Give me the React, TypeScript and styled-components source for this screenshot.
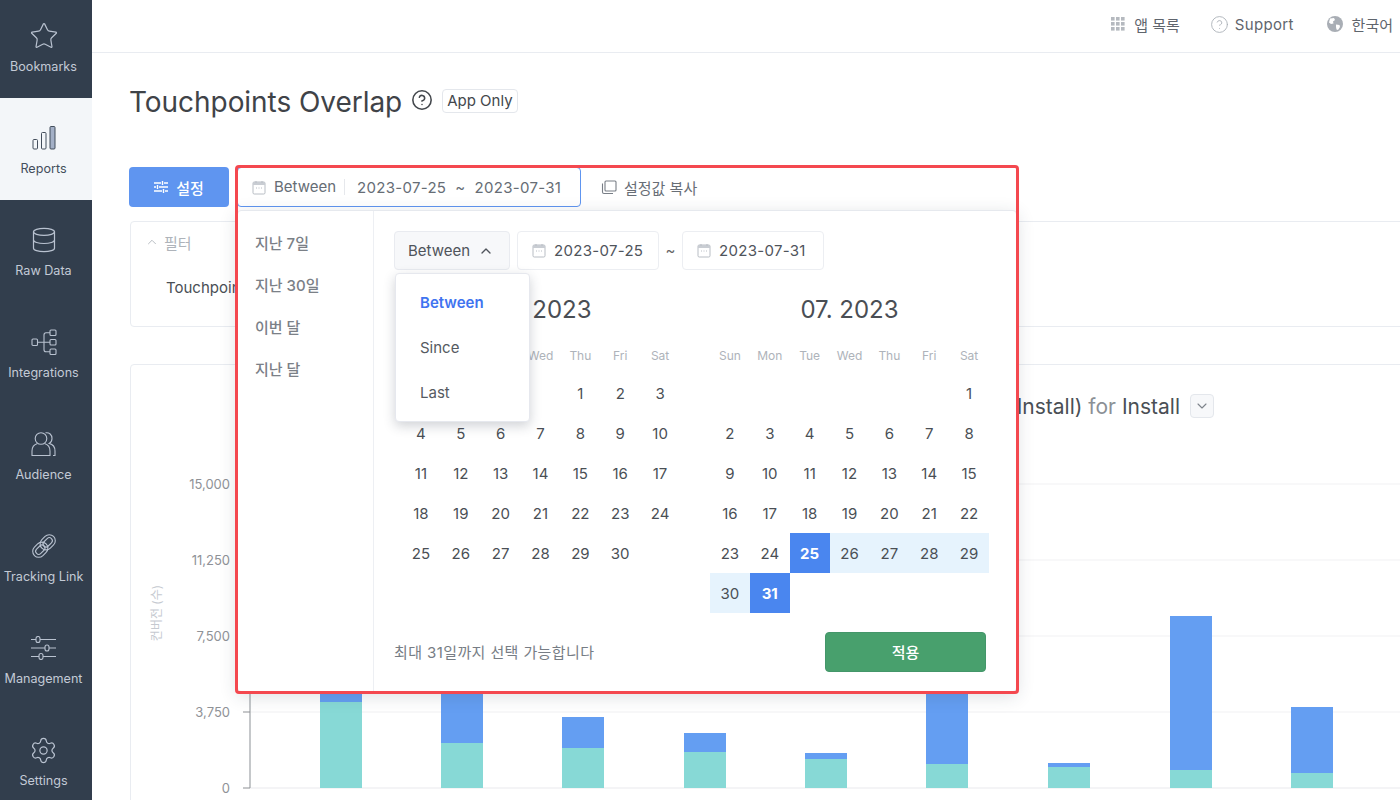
import React from 'react';
import styled, { createGlobalStyle } from 'styled-components';
import { Star, Database, Settings, CircleHelp, ChevronUp, ChevronDown } from 'lucide-react';

const GlobalStyle = createGlobalStyle`
  html, body { margin: 0; padding: 0; background: #fff; }
  body { font-family: Inter, "Noto Sans CJK KR", sans-serif; color: #4a4f55; }
  * { box-sizing: border-box; }
`;

const Page = styled.div`
  display: flex;
  width: 1400px;
  height: 800px;
  overflow: hidden;
`;

const Sidebar = styled.nav`
  flex: 0 0 92px;
  background: #323e4d;
  overflow: hidden;
`;

const SideList = styled.div`
  display: flex;
  flex-direction: column;
  margin-top: -4px;
`;

const SideItem = styled.a<{ $active?: boolean }>`
  display: flex;
  flex-direction: column;
  align-items: center;
  height: 102px;
  padding: 25px 5px 0 0;
  font-size: 12.6px;
  line-height: 16px;
  white-space: nowrap;
  color: ${(p) => (p.$active ? '#434e5c' : '#c3cad6')};
  background: ${(p) => (p.$active ? '#f3f6f9' : 'transparent')};
`;

const SideIcon = styled.span`
  display: flex;
  align-items: center;
  justify-content: center;
  width: 30px;
  height: 30px;
  margin-bottom: 8px;
`;

const Main = styled.main`
  flex: 1;
  min-width: 0;
`;

const TopBar = styled.header`
  display: flex;
  justify-content: flex-end;
  align-items: center;
  height: 53px;
  padding: 0 7px 4px 0;
  gap: 32px;
  border-bottom: 1px solid #e9ecf1;
`;

const TopLink = styled.span<{ $gap: number; $pull?: number; $tracking?: number }>`
  display: flex;
  align-items: center;
  gap: ${(p) => p.$gap}px;
  margin-left: ${(p) => p.$pull ?? 0}px;
  font-size: 15px;
  letter-spacing: ${(p) => p.$tracking ?? 0}px;
  color: #5f656d;
`;

const Content = styled.div`
  width: 1340px;
  padding: 32px 0 0 38px;
`;

const TitleRow = styled.div`
  display: flex;
  align-items: center;
  height: 34px;
`;

const Title = styled.h1`
  margin: 0 0 0 -1px;
  font-size: 28px;
  line-height: 34px;
  font-weight: 400;
  letter-spacing: -0.05px;
  color: #3f4348;
`;

const HelpIcon = styled.span`
  display: flex;
  margin: 0 9px 4px 9px;
  color: #43474c;
`;

const Badge = styled.span`
  display: flex;
  align-items: center;
  height: 24px;
  padding: 0 4px;
  margin-bottom: 3px;
  font-size: 15px;
  color: #43474c;
  border: 1px solid #e4e7ec;
  border-radius: 4px;
`;

const Toolbar = styled.div`
  display: flex;
  align-items: center;
  height: 40px;
  margin: 48px 0 0 -1px;
`;

const SetupButton = styled.button`
  display: flex;
  align-items: center;
  justify-content: center;
  gap: 8px;
  width: 100px;
  height: 40px;
  padding: 0;
  margin-right: 8px;
  font: 500 15px Inter, "Noto Sans CJK KR", sans-serif;
  color: #fff;
  background: #5f95f0;
  border: 0;
  border-radius: 4px;
`;

const DateWrap = styled.div`
  position: relative;
  height: 40px;
`;

const DateButton = styled.div`
  display: flex;
  align-items: center;
  width: 344px;
  height: 40px;
  padding-left: 14px;
  font-size: 15px;
  color: #666d75;
  background: #fff;
  border: 1px solid #5f95f0;
  border-radius: 4px;
`;

const RangeMode = styled.span`
  margin-left: 8px;
  padding-right: 8px;
  line-height: 16px;
  border-right: 1px solid #e6e8ec;
`;

const RangeText = styled.span`
  margin-left: 12px;
  letter-spacing: 0.3px;
  white-space: pre;
`;

const CopyButton = styled.span`
  display: flex;
  align-items: center;
  gap: 7px;
  margin-left: 20px;
  font-size: 15px;
  color: #686e76;
`;

const Highlight = styled.div`
  position: absolute;
  top: -2px;
  left: -2px;
  width: 784px;
  height: 529px;
  border: 3px solid #f4484f;
  border-radius: 4px;
  pointer-events: none;
  z-index: 5;
`;

const Popover = styled.div`
  position: absolute;
  top: 43px;
  left: 0;
  display: flex;
  width: 780px;
  height: 482px;
  background: #fff;
  border: 1px solid #e6e9ee;
  border-radius: 4px;
  box-shadow: 0 4px 18px rgba(40, 50, 70, 0.16);
  z-index: 4;
`;

const Presets = styled.ul`
  flex: 0 0 136px;
  margin: 0;
  padding: 11.5px 0 0 17px;
  list-style: none;
  border-right: 1px solid #edeff3;
`;

const Preset = styled.li`
  height: 42px;
  font-size: 15px;
  font-weight: 500;
  line-height: 42px;
  color: #7b8087;
`;

const PickerPane = styled.div`
  flex: 1;
  padding: 20px 0 0 20px;
`;

const RangeControls = styled.div`
  display: flex;
  align-items: center;
  height: 39px;
`;

const SelectWrap = styled.div`
  position: relative;
  margin-right: 7px;
`;

const ModeSelect = styled.div`
  display: flex;
  align-items: center;
  gap: 8px;
  width: 116px;
  height: 39px;
  padding-left: 13px;
  font-size: 15px;
  color: #4f545b;
  background: #f7f8fa;
  border: 1px solid #e9ebf0;
  border-radius: 4px;
`;

const ModeMenu = styled.ul`
  position: absolute;
  top: 42px;
  left: 1px;
  width: 135px;
  height: 149px;
  margin: 0;
  padding: 6px 0 0;
  list-style: none;
  background: #fff;
  border: 1px solid #e6e8ee;
  border-radius: 4px;
  box-shadow: 0 4px 12px rgba(40, 50, 70, 0.22);
  z-index: 3;
`;

const ModeOption = styled.li<{ $selected?: boolean }>`
  height: 45px;
  padding-left: 24px;
  font-size: 15px;
  line-height: 45px;
  font-weight: ${(p) => (p.$selected ? 600 : 400)};
  color: ${(p) => (p.$selected ? '#3f74f0' : '#555a61')};
`;

const DateInput = styled.div`
  display: flex;
  align-items: center;
  gap: 8px;
  width: 142px;
  height: 39px;
  padding-left: 14px;
  font-size: 15px;
  letter-spacing: 0.3px;
  color: #4f545b;
  background: #fff;
  border: 1px solid #eceef2;
  border-radius: 4px;
`;

const Tilde = styled.span`
  width: 23px;
  text-align: center;
  font-size: 15px;
  color: #666;
`;

const CalendarPair = styled.div`
  display: flex;
  gap: 30px;
  margin: 25px 0 0 7px;
`;

const Calendar = styled.div`
  width: 279px;
`;

const MonthTitle = styled.div`
  height: 30px;
  font-size: 24px;
  line-height: 30px;
  text-align: center;
  color: #4a4e54;
`;

const WeekRow = styled.div`
  display: grid;
  grid-template-columns: repeat(7, 1fr);
  height: 20px;
  margin: 21px 0 7px;
  font-size: 12px;
  line-height: 20px;
  text-align: center;
  color: #aeb3ba;
`;

const DayGrid = styled.div`
  display: grid;
  grid-template-columns: repeat(7, 1fr);
  grid-auto-rows: 40px;
  height: 240px;
`;

const Day = styled.div<{ $kind?: 'edge' | 'range' }>`
  display: flex;
  align-items: center;
  justify-content: center;
  font-size: 15px;
  font-weight: ${(p) => (p.$kind === 'edge' ? 700 : 400)};
  color: ${(p) => (p.$kind === 'edge' ? '#fff' : '#4a4f55')};
  background: ${(p) =>
    p.$kind === 'edge' ? '#4a86ef' : p.$kind === 'range' ? '#e6f3fd' : 'transparent'};
`;

const PickerFooter = styled.div`
  display: flex;
  align-items: center;
  justify-content: space-between;
  width: 592px;
  height: 40px;
  margin-top: 19px;
`;

const Hint = styled.span`
  margin-bottom: 2px;
  font-size: 15px;
  letter-spacing: 0.4px;
  color: #777d85;
`;

const ApplyButton = styled.button`
  width: 161px;
  height: 40px;
  padding: 0 0 2px;
  font: 500 15px Inter, "Noto Sans CJK KR", sans-serif;
  color: #fff;
  background: #48a06d;
  border: 1px solid #44966a;
  border-radius: 4px;
`;

const Card = styled.section`
  background: #fff;
  border: 1px solid #e9ecf1;
  border-radius: 4px;
`;

const FilterCard = styled(Card)`
  height: 106px;
  margin-top: 14px;
  padding: 10px 0 0 14px;
`;

const FilterHead = styled.div`
  display: flex;
  align-items: center;
  gap: 5px;
  height: 20px;
  font-size: 15px;
  color: #aeb3ba;
`;

const FilterName = styled.div`
  margin: 26px 0 0 21px;
  font-size: 15px;
  line-height: 20px;
  color: #4a4f55;
`;

const ChartCard = styled(Card)`
  height: 460px;
  margin-top: 37px;
  padding-top: 29px;
`;

const ChartHead = styled.div`
  display: flex;
  align-items: center;
  justify-content: flex-end;
  gap: 10px;
  width: 1083px;
  height: 24px;
`;

const ChartTitle = styled.h2`
  margin: 0;
  font-size: 21px;
  font-weight: 400;
  white-space: nowrap;
  color: #4a4f55;
`;

const Muted = styled.span`
  color: #8b9096;
`;

const ChevronBox = styled.span`
  display: flex;
  align-items: center;
  justify-content: center;
  width: 24px;
  height: 24px;
  color: #7d838b;
  background: #f7f8fa;
  border: 1px solid #e4e7ec;
  border-radius: 4px;
`;

const ChartSvg = styled.svg`
  display: block;
  width: 1270px;
  height: 330px;
  margin: 52px 0 0 -1px;
`;

const CalendarIcon = () => (
  <svg width="14" height="15" viewBox="0 0 14 15" fill="none">
    <rect x="1" y="2" width="12" height="12" rx="1.2" stroke="#b8bdc4" />
    <rect x="1" y="2" width="12" height="3" fill="#c9cdd3" />
    <path d="M4 1v2M10 1v2" stroke="#b8bdc4" />
    <path d="M4 8h1M6.5 8h1M9 8h1" stroke="#b8bdc4" />
  </svg>
);

const ReportsIcon = () => (
  <svg width="26" height="26" viewBox="0 0 26 26" fill="none" stroke="#434e5c" strokeWidth="1">
    <rect x="2" y="14.5" width="4.5" height="9.5" rx="1" />
    <rect x="10.5" y="7.5" width="4.5" height="16.5" rx="1" />
    <rect x="19" y="1.5" width="5" height="22.5" rx="1" fill="#a3b0c7" />
  </svg>
);

const IntegrationsIcon = () => (
  <svg width="26" height="28" viewBox="0 0 26 28" fill="none" stroke="#b9c2d0" strokeWidth="1.1">
    <rect x="1" y="11" width="5.5" height="6.5" rx="1" />
    <rect x="19" y="2" width="6" height="5.5" rx="1" />
    <rect x="19" y="11.5" width="6" height="5.5" rx="1" />
    <rect x="19" y="21" width="6" height="5.5" rx="1" />
    <path d="M6.5 14.2H19M13 14.2V7c0-1.5.8-2.2 2-2.2h4M13 14.2v7.5c0 1.4.8 2 2 2h4" />
  </svg>
);

const AudienceIcon = () => (
  <svg width="28" height="26" viewBox="0 0 28 26" fill="none" stroke="#b9c2d0" strokeWidth="1.1">
    <circle cx="11" cy="7.5" r="5.8" />
    <path d="M7.5 12.5C4 13.5 2 16.5 2 20v4.5h18V20c0-3.5-2-6.5-5.5-7.5" />
    <path d="M15.5 1.800c3.800-.6 6.500 2 6.500 5.600 0 2.200-1 4-2.800 5 3.700 1 5.800 4 5.800 7.600v4.500h-2" />
  </svg>
);

const TrackingIcon = () => (
  <svg width="28" height="28" viewBox="0 0 28 28" fill="none" stroke="#b9c2d0" strokeWidth="1.1">
    <g transform="rotate(-45 14 14)">
      <rect x="0.5" y="8" width="16.500" height="12" rx="6" />
      <rect x="3.500" y="11" width="10.500" height="6" rx="3" />
      <rect x="11" y="8" width="16.500" height="12" rx="6" />
      <rect x="14" y="11" width="10.500" height="6" rx="3" />
    </g>
  </svg>
);

const ManagementIcon = () => (
  <svg width="27" height="24" viewBox="0 0 27 24" fill="none" stroke="#b9c2d0" strokeWidth="1.1">
    <path d="M1 3.500h5M10 3.500h16M1 12h14M19 12h7M1 20.500h8M13 20.500h13" />
    <rect x="6" y="0.500" width="4" height="6" rx="2" />
    <rect x="15" y="9" width="4" height="6" rx="2" />
    <rect x="9" y="17.500" width="4" height="6" rx="2" />
  </svg>
);

const SlidersIcon = () => (
  <svg width="14" height="12" viewBox="0 0 14 12" fill="none" stroke="#fff" strokeWidth="1.4">
    <path d="M0 2h7M10 2h4M0 6h2M5 6h9M0 10h8M11 10h3M8.500 0v4M3.500 4v4M9.500 8v4" />
  </svg>
);

const AppsIcon = () => (
  <svg width="14" height="14" viewBox="0 0 14 14" fill="#b5b9bf">
    {[0, 5, 10].flatMap((y) =>
      [0, 5, 10].map((x) => <rect key={`${x}-${y}`} x={x} y={y} width="3.600" height="3.600" />),
    )}
  </svg>
);

const GlobeIcon = () => (
  <svg width="18" height="18" viewBox="0 0 18 18">
    <circle cx="9" cy="9" r="8" fill="#a9aeb5" />
    <path d="M4 3.500 8 3l1 2-2 1.500.5 2-2.500.5L3 7.500zM10 9.500l3.500.5.5 2-2 3-1.500-.5-.5-2.500z" fill="#fff" />
  </svg>
);

const CopyIcon = () => (
  <svg width="16" height="16" viewBox="0 0 16 16" fill="none" stroke="#787e86" strokeWidth="1.1">
    <rect x="4" y="2" width="11" height="10" rx="1" />
    <path d="M1.500 4.500V13c0 .8.500 1.500 1.500 1.500h9" />
  </svg>
);

const navItems = [
  { label: 'Bookmarks', icon: <Star size={30} strokeWidth={0.95} color="#b9c2d0" /> },
  { label: 'Reports', icon: <ReportsIcon />, active: true },
  { label: 'Raw Data', icon: <Database size={28} strokeWidth={1.05} color="#b9c2d0" /> },
  { label: 'Integrations', icon: <IntegrationsIcon /> },
  { label: 'Audience', icon: <AudienceIcon /> },
  { label: 'Tracking Link', icon: <TrackingIcon /> },
  { label: 'Management', icon: <ManagementIcon /> },
  { label: 'Settings', icon: <Settings size={29} strokeWidth={1} color="#b9c2d0" /> },
];

const weekdays = ['Sun', 'Mon', 'Tue', 'Wed', 'Thu', 'Fri', 'Sat'];
const presets = ['지난 7일', '지난 30일', '이번 달', '지난 달'];

const months = [
  { title: '06. 2023', offset: 4, days: 30 },
  { title: '07. 2023', offset: 6, days: 31, edges: [25, 31], range: [26, 27, 28, 29, 30] },
];

const gridLines = [484, 560, 636, 712, 788];
const yLabels = ['15,000', '11,250', '7,500', '3,750', '0'];

// x, top of the blue part, top of the teal part
const bars = [
  [320, 660, 702],
  [441, 650, 743],
  [562, 717, 748],
  [684, 733, 752],
  [805, 753, 759],
  [926, 650, 764],
  [1048, 763, 767],
  [1170, 616, 770],
  [1291, 707, 773],
];

const App = () => {
  return (
    <Page>
      <GlobalStyle />
      <Sidebar>
        <SideList>
          {navItems.map((item) => (
            <SideItem key={item.label} $active={item.active}>
              <SideIcon>{item.icon}</SideIcon>
              {item.label}
            </SideItem>
          ))}
        </SideList>
      </Sidebar>

      <Main>
        <TopBar>
          <TopLink $gap={9}><AppsIcon />앱 목록</TopLink>
          <TopLink $gap={6} $pull={-2} $tracking={0.3}><CircleHelp size={19} strokeWidth={1.1} color="#a9aeb5" />Support</TopLink>
          <TopLink $gap={8}><GlobeIcon />한국어</TopLink>
        </TopBar>

        <Content>
          <TitleRow>
            <Title>Touchpoints Overlap</Title>
            <HelpIcon><CircleHelp size={22} strokeWidth={1.7} /></HelpIcon>
            <Badge>App Only</Badge>
          </TitleRow>

          <Toolbar>
            <SetupButton><SlidersIcon />설정</SetupButton>
            <DateWrap>
              <DateButton>
                <CalendarIcon />
                <RangeMode>Between</RangeMode>
                <RangeText>2023-07-25  ~  2023-07-31</RangeText>
              </DateButton>
              <Highlight />
              <Popover>
                <Presets>
                  {presets.map((p) => <Preset key={p}>{p}</Preset>)}
                </Presets>
                <PickerPane>
                  <RangeControls>
                    <SelectWrap>
                      <ModeSelect>Between<ChevronUp size={16} strokeWidth={2} /></ModeSelect>
                      <ModeMenu>
                        <ModeOption $selected>Between</ModeOption>
                        <ModeOption>Since</ModeOption>
                        <ModeOption>Last</ModeOption>
                      </ModeMenu>
                    </SelectWrap>
                    <DateInput><CalendarIcon />2023-07-25</DateInput>
                    <Tilde>~</Tilde>
                    <DateInput><CalendarIcon />2023-07-31</DateInput>
                  </RangeControls>
                  <CalendarPair>
                    {months.map((m) => (
                      <Calendar key={m.title}>
                        <MonthTitle>{m.title}</MonthTitle>
                        <WeekRow>
                          {weekdays.map((d) => <span key={d}>{d}</span>)}
                        </WeekRow>
                        <DayGrid>
                          {Array.from({ length: m.offset }, (_, i) => <span key={`e${i}`} />)}
                          {Array.from({ length: m.days }, (_, i) => i + 1).map((d) => (
                            <Day
                              key={d}
                              $kind={m.edges?.includes(d) ? 'edge' : m.range?.includes(d) ? 'range' : undefined}
                            >
                              {d}
                            </Day>
                          ))}
                        </DayGrid>
                      </Calendar>
                    ))}
                  </CalendarPair>
                  <PickerFooter>
                    <Hint>최대 31일까지 선택 가능합니다</Hint>
                    <ApplyButton>적용</ApplyButton>
                  </PickerFooter>
                </PickerPane>
              </Popover>
            </DateWrap>
            <CopyButton><CopyIcon />설정값 복사</CopyButton>
          </Toolbar>

          <FilterCard>
            <FilterHead><ChevronUp size={14} strokeWidth={1.5} />필터</FilterHead>
            <FilterName>Touchpoint</FilterName>
          </FilterCard>

          <ChartCard>
            <ChartHead>
              <ChartTitle>Touchpoints (Install) <Muted>for</Muted> Install</ChartTitle>
              <ChevronBox><ChevronDown size={16} strokeWidth={1.6} /></ChevronBox>
            </ChartHead>
            <ChartSvg viewBox="130 470 1270 330">
              {gridLines.map((y) => (
                <line key={y} x1="250" x2="1400" y1={y} y2={y} stroke={y === 788 ? '#e9eaed' : '#f1f2f4'} strokeWidth="1.2" />
              ))}
              <line x1="250" x2="250" y1="484" y2="788" stroke="#adb0b4" strokeWidth="1.4" />
              {gridLines.map((y, i) => (
                <React.Fragment key={y}>
                  <line x1="243" x2="250" y1={y} y2={y} stroke="#8d9094" strokeWidth="1" />
                  <text x="230" y={y + 5} textAnchor="end" fontSize="13" fill="#8f9297">{yLabels[i]}</text>
                </React.Fragment>
              ))}
              <text
                transform="translate(161 613) rotate(-90)"
                textAnchor="middle"
                fontSize="12"
                fill="#c5c9d0"
              >
                컨버전 (수)
              </text>
              {bars.map(([x, blue, teal]) => (
                <g key={x}>
                  <rect x={x} y={blue} width="42" height={teal - blue} fill="#649ef2" />
                  <rect x={x} y={teal} width="42" height={788 - teal} fill="#87d9d6" />
                </g>
              ))}
            </ChartSvg>
          </ChartCard>
        </Content>
      </Main>
    </Page>
  );
};

export default App;
